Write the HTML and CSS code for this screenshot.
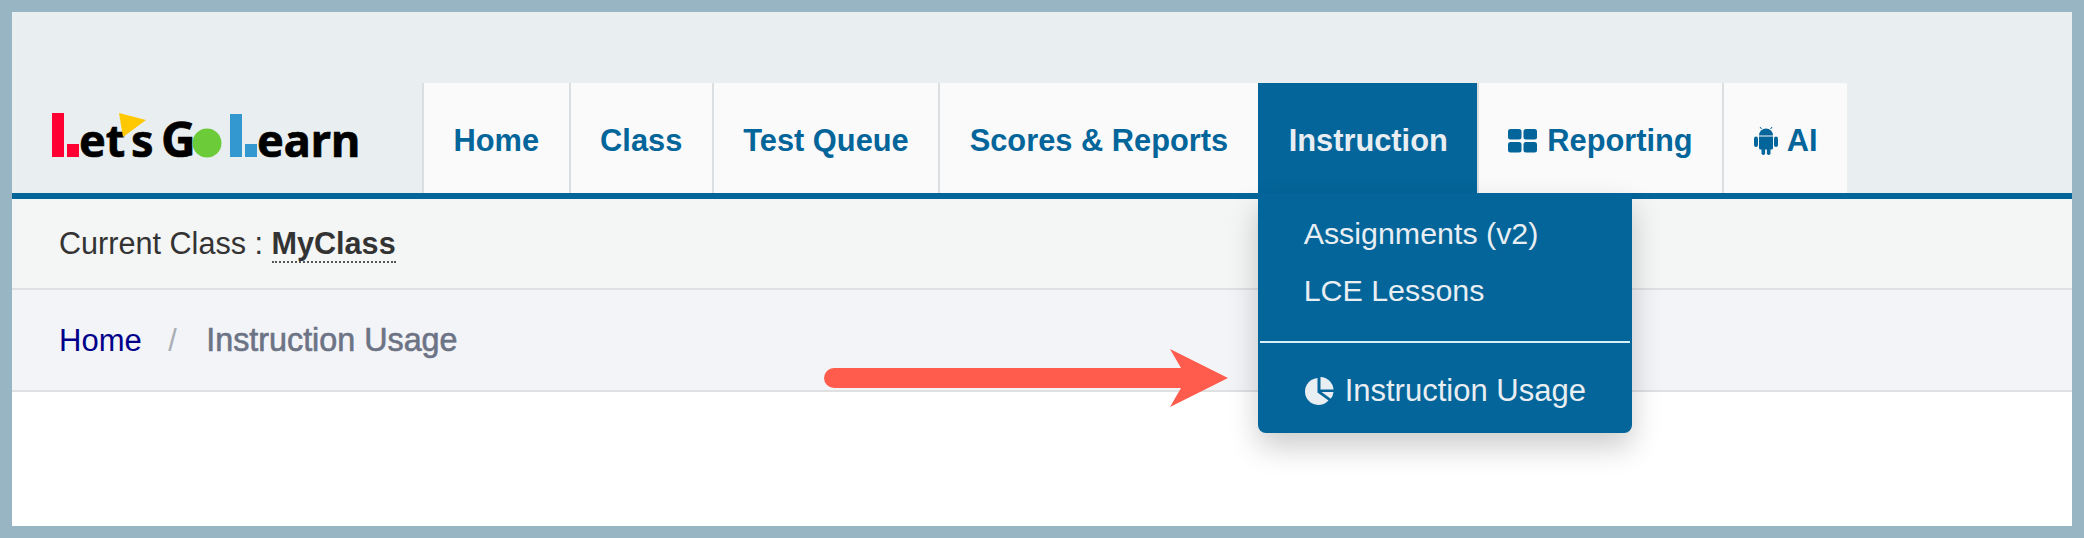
FILE: index.html
```html
<!DOCTYPE html>
<html lang="en">
<head>
  <meta charset="UTF-8" />
  <title>Instruction Usage</title>
  <link rel="stylesheet" href="styles.css">
</head>
<body>
  <div class="frame">
    <header class="topbar">
      <a class="logo" href="#" aria-label="Let's Go Learn">
        <svg width="330" height="68" viewBox="0 -8 330 68">
          <rect x="0" y="0" width="12" height="44" fill="#ff0033"/>
          <rect x="15" y="31" width="12" height="13" fill="#ff0033"/>
          <text class="logo-text" x="27" y="44">et</text>
          <polygon points="67,0 94,7 71,24" fill="#ffc800"/>
          <text class="logo-text" x="79" y="44">s</text>
          <text class="logo-text logo-cap" x="109" y="44">G</text>
          <circle cx="155" cy="30" r="14.5" fill="#6ccb38"/>
          <rect x="178" y="1" width="12" height="43" fill="#3398d0"/>
          <rect x="193" y="31" width="12" height="13" fill="#3398d0"/>
          <text class="logo-text" x="205" y="44">earn</text>
        </svg>
      </a>
      <nav class="tabs">
        <a class="tab" href="#">Home</a>
        <a class="tab" href="#">Class</a>
        <a class="tab" href="#">Test Queue</a>
        <a class="tab" href="#">Scores &amp; Reports</a>
        <div class="tab-wrap">
          <a class="tab active" href="#">Instruction</a>
          <div class="dropdown">
            <a class="drop-item" href="#">Assignments (v2)</a>
            <a class="drop-item" href="#">LCE Lessons</a>
            <div class="drop-divider"></div>
            <a class="drop-item usage" href="#">
              <svg class="pie-icon" width="30" height="30" viewBox="0 0 30 30">
                <path d="M13.5 2 A13.5 13.5 0 1 0 24.5 24.5 L13.5 16.5 Z"/>
                <path d="M16.5 1 A13.5 13.5 0 0 1 29.5 13.5 L16.5 13.5 Z"/>
                <path d="M17.5 16 H29.5 A13.5 13.5 0 0 1 26.8 22.8 Z"/>
              </svg>
              Instruction Usage
            </a>
          </div>
        </div>
        <a class="tab icon-tab" href="#">
          <svg width="30" height="24" viewBox="0 0 30 24">
            <rect x="0" y="0" width="13.5" height="10.5" rx="2.5"/>
            <rect x="15.5" y="0" width="13.5" height="10.5" rx="2.5"/>
            <rect x="0" y="13" width="13.5" height="10.5" rx="2.5"/>
            <rect x="15.5" y="13" width="13.5" height="10.5" rx="2.5"/>
          </svg>
          Reporting
        </a>
        <a class="tab icon-tab" href="#">
          <svg width="24" height="28" viewBox="0 0 24 28">
            <path d="M5 8.5 A7 7 0 0 1 19 8.5 Z"/>
            <path d="M7.5 2 L6 0 M16.5 2 L18 0" class="antenna"/>
            <path d="M5 9.5 H19 V21 A1.5 1.5 0 0 1 17.5 22.5 H6.5 A1.5 1.5 0 0 1 5 21 Z"/>
            <rect x="0" y="9.5" width="4" height="10.5" rx="2"/>
            <rect x="20" y="9.5" width="4" height="10.5" rx="2"/>
            <rect x="7.5" y="20" width="3.6" height="8" rx="1.8"/>
            <rect x="12.9" y="20" width="3.6" height="8" rx="1.8"/>
          </svg>
          AI
        </a>
      </nav>
    </header>

    <div class="class-bar">Current Class : <span class="class-name">MyClass</span></div>

    <div class="crumbs">
      <a class="crumb-link" href="#">Home</a>
      <span class="crumb-sep">/</span>
      <span class="crumb-current">Instruction Usage</span>
    </div>

    <div class="content"></div>

    <svg class="arrow" width="406" height="58" viewBox="0 0 406 58">
      <path d="M10 19 H357 L346 0 L404 29 L346 58 L357 39 H10 A10 10 0 0 1 10 19 Z"/>
    </svg>
  </div>
</body>
</html>
```

FILE: styles.css
```css
* { box-sizing: border-box; }
html, body { height: 100%; }
body {
  margin: 0;
  font-family: "Liberation Sans", Arial, sans-serif;
  font-size: 30.6px;
  color: #333;
}
a { text-decoration: none; }

.frame {
  position: relative;
  height: 538px;
  border: 12px solid #97b5c3;
  background: #fff;
  display: flex;
  flex-direction: column;
  overflow: hidden;
}

/* header */
.topbar {
  display: flex;
  height: 187px;
  padding-top: 71px;
  background: #e9eef1;
  border-bottom: 6px solid #03659a;
}
.logo {
  width: 410px;
  padding: 22px 0 0 40px;
}
.logo svg { display: block; }
.logo-text {
  font-family: "Noto Sans", sans-serif;
  font-weight: 700;
  font-size: 45px;
  fill: #000;
  stroke: #000;
  stroke-width: 0.7px;
}
.logo-cap { font-size: 48px; }

.tabs { display: flex; }
.tab {
  display: flex;
  align-items: center;
  gap: 9px;
  height: 110px;
  padding: 6px 29.5px 0;
  background: #fafafa;
  border-left: 2px solid #dcdfe1;
  color: #03659a;
  font-weight: 700;
  font-size: 30.8px;
  white-space: nowrap;
}
.tab svg { fill: #03659a; flex-shrink: 0; }
.antenna { stroke: #03659a; stroke-width: 1; fill: none; }
.tab.active {
  padding: 6px 29px 0 31px;
  background: #03659a;
  color: #e9eef3;
  border-left: 0;
}
.tab-wrap { position: relative; }

/* instruction menu */
.dropdown {
  position: absolute;
  top: 110px;
  left: 0;
  width: 374px;
  height: 240px;
  padding-top: 12px;
  background: #03659a;
  border-radius: 0 0 8px 8px;
  box-shadow: 0 14px 30px rgba(0,0,0,0.2);
  z-index: 5;
}
.drop-item {
  display: flex;
  align-items: center;
  gap: 11px;
  height: 57px;
  padding-left: 46px;
  color: #e9eef3;
  font-size: 30.4px;
}
.drop-divider {
  height: 2px;
  margin: 22px 2px 0;
  background: #d8f0fa;
}
.usage { margin-top: 19px; font-size: 31px; }
.pie-icon { fill: #e9eef3; }

/* class + breadcrumb rows */
.class-bar {
  height: 91px;
  padding: 24px 0 0 47px;
  background: #f4f5f5;
  border-bottom: 2px solid #dfe0e2;
  line-height: 40px;
}
.class-name {
  font-weight: 700;
  border-bottom: 2px dotted #555;
  line-height: 35px;
  display: inline-block;
}
.crumbs {
  height: 102px;
  padding: 30px 0 0 47px;
  background: #f3f4f7;
  border-bottom: 2px solid #dfe0e2;
  line-height: 40px;
}
.crumb-link { color: #00008b; font-size: 31px; }
.crumb-sep { color: #a9adb5; margin: 0 21px 0 18px; }
.crumb-current { color: #6c7385; font-size: 32.3px; -webkit-text-stroke: 0.6px #6c7385; }
.content { flex: 1; }

.arrow {
  position: absolute;
  left: 812px;
  top: 337px;
  fill: #ff5c4d;
  z-index: 6;
}
```
